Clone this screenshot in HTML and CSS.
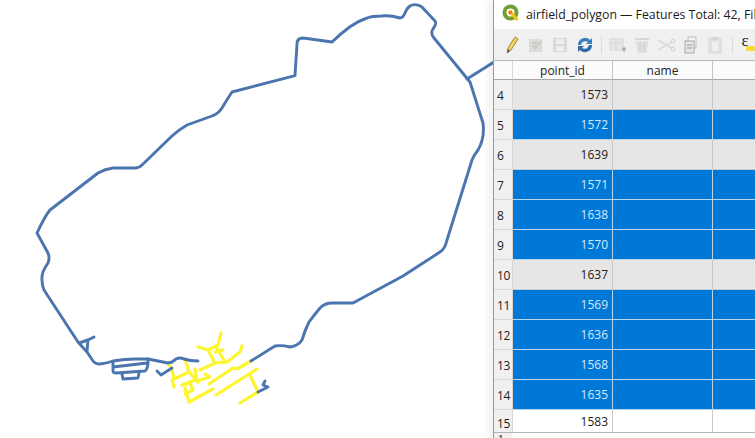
FILE: index.html
```html
<!DOCTYPE html>
<html lang="en">
<head>
<meta charset="utf-8">
<title>airfield_polygon</title>
<link rel="stylesheet" href="styles.css">
</head>
<body>
<div class="desktop">
  <svg class="map" width="494" height="438" viewBox="0 0 494 438">
    <g class="road road-yellow">
      <path d="M168 363 L172 370 L174 378"/>
      <path d="M185 359 L189 372 L172 380 L174 387"/>
      <path d="M189 372 L198 382"/>
      <path d="M195 369 L197 381 L210 377 L205 374"/>
      <path d="M182 385 L195 380"/>
      <path d="M182 385 L190 383 L193 390 L185 394"/>
      <path d="M185 388 L189 402 L213 389"/>
      <path d="M200 370 L215 363 L208 350 L198 347"/>
      <path d="M208 350 L218 345 L221 333"/>
      <path d="M215 363 L227 362 L240 352 L242 346"/>
      <path d="M217 348 L225 362"/>
      <path d="M215 352 L223 350"/>
      <path d="M209 384 L233 368 L237 369 L251 361"/>
      <path d="M216 395 L257 369"/>
      <path d="M250 375 L258 392"/>
      <path d="M240 403 L258 392"/>
    </g>
    <g class="road road-blue">
      <path d="M251 361 L275 346 Q282 345 290 347 Q298 346 302 340 Q305 330 309 322 Q315 314 320 308 Q325 303 332 303 L353 303 L403 276 L440 252 Q445 249 447 240 L472 160 Q474 155 478 150 Q485 138 483 123 L470 82 L434 38 Q430 33 433 29 Q437 24 435 21 L421.700 6.700 Q415 3 410 6 Q407 8 405 13 Q403 18 400 18 Q390 15 381.700 16 Q372 16 367 18 Q358 21 350 26.700 Q340 34 332 42 L303 38 Q297 38 297 44 L295 75.700 L232 92 Q228 98 222 108 Q218 114 212 116 L187 125 Q180 129 172 136 L142 165 Q139 168 135 168 L113 168 Q105 169 98 173 L50 210 Q45 216 37 233 L48 253 Q50 258 48 263 Q41 273 42 280 Q42 285 44 290 L78 342 L87 352 L93 361 Q95 364 100 364 Q108 363 113 361 Q125 359 135 359 L148 359 L168 363 L172 362 L176 359 Q180 357 184 359 Q190 361 198 361"/>
      <path d="M467 79 L494 62"/>
      <path d="M79 343 L88 340 L94 337 M88 340 L87 351"/>
      <path d="M113 362 L113 371 Q113 373 116 373 L145 371 Q147 370 148 364 L148 359 M113 367 L147 363"/>
      <path d="M122 374 L123 379 L138 378 L139 373"/>
      <path d="M157 371 L161 375 L172 368"/>
      <path d="M258 392 L268 387 L263 385 L265 381"/>
    </g>
  </svg>

  <section class="window">
    <header class="titlebar">
      <svg class="logo" width="18" height="18" viewBox="0 0 18 18">
        <circle cx="8.500" cy="8.500" r="6" fill="none" stroke="#6fa032" stroke-width="4"/>
        <circle cx="8.500" cy="8.500" r="2.200" fill="#ee7913"/>
        <path d="M9.500 9.500 L15.500 16" stroke="#f0c419" stroke-width="3"/>
      </svg>
      <span class="title">airfield_polygon — Features Total: 42, Filtered: 42, Selected: 9</span>
    </header>

    <div class="toolbar">
      <svg class="tool" width="24" height="18" viewBox="0 0 24 18"><path d="M8 17 L9 12 L16 1 L19 3 L12 14 Z" fill="#efd35c" stroke="#a08d3a"/><path d="M8 17 L9 13 L11 15 Z" fill="#555"/></svg>
      <svg class="tool" width="24" height="18" viewBox="0 0 24 18"><rect x="5" y="3" width="13" height="13" fill="#dcdcd8"/><path d="M8 7 H14 M8 10 H12 M10 13 L18 5" stroke="#c6c6c2" stroke-width="1.500"/></svg>
      <svg class="tool" width="24" height="18" viewBox="0 0 24 18"><rect x="5" y="2" width="14" height="14" rx="1" fill="#d8d8d8"/><rect x="8" y="3" width="8" height="5" fill="#eee"/><rect x="8" y="10" width="8" height="5" fill="#eee"/></svg>
      <svg class="tool" width="24" height="18" viewBox="0 0 24 18"><path d="M5 9 A7 7 0 0 1 17 4 L19 2 V8 H13 L15 6 A4.500 4.500 0 0 0 8 9 Z" fill="#3d7fc1"/><path d="M19 9 A7 7 0 0 1 7 14 L5 16 V10 H11 L9 12 A4.500 4.500 0 0 0 16 9 Z" fill="#2f6ba8"/></svg>
      <span class="sep"></span>
      <svg class="tool" width="24" height="18" viewBox="0 0 24 18"><rect x="5" y="3" width="13" height="11" fill="#e6e6e4" stroke="#d8d8d5"/><path d="M5 7 H18 M11 3 V14" stroke="#d8d8d5"/><path d="M17 13 H21 M19 11 V16" stroke="#aaa" stroke-width="1.500"/></svg>
      <svg class="tool" width="24" height="18" viewBox="0 0 24 18"><path d="M6 5 H18 L17 17 H7 Z" fill="#e0e0de"/><rect x="5" y="2" width="14" height="2" fill="#d6d6d3"/><path d="M10 7 V15 M14 7 V15" stroke="#cacac6"/></svg>
      <svg class="tool" width="24" height="18" viewBox="0 0 24 18"><path d="M4 4 L18 12 M4 14 L18 6" stroke="#dadad8" stroke-width="1.500" fill="none"/><circle cx="19" cy="13" r="2" fill="none" stroke="#cfcfcd"/><circle cx="19" cy="5" r="2" fill="none" stroke="#cfcfcd"/></svg>
      <svg class="tool" width="24" height="18" viewBox="0 0 24 18"><rect x="9" y="1" width="8" height="11" fill="#f3f3f3" stroke="#bbb"/><rect x="6" y="5" width="9" height="12" fill="#e6e6e6" stroke="#aaa"/><path d="M8 9 H13 M8 12 H13" stroke="#999"/></svg>
      <svg class="tool" width="24" height="18" viewBox="0 0 24 18"><rect x="6" y="2" width="12" height="15" fill="#e2e2e0" stroke="#d8d8d6"/><rect x="9" y="1" width="6" height="3" fill="#d6d6d4"/><rect x="9" y="6" width="6" height="9" fill="#efefef"/></svg>
      <span class="sep sep-last"></span>
      <span class="expr"><span class="expr-box"></span><span class="expr-sign">ε</span></span>
    </div>

    <div class="table">
      <div class="row head">
        <div class="num"></div>
        <div class="cell">point_id</div>
        <div class="cell">name</div>
        <div class="cell">en_name</div>
      </div>
      <div class="row grey"><div class="num">4</div><div class="cell id">1573</div><div class="cell"></div><div class="cell"></div></div>
      <div class="row sel"><div class="num">5</div><div class="cell id">1572</div><div class="cell"></div><div class="cell"></div></div>
      <div class="row grey"><div class="num">6</div><div class="cell id">1639</div><div class="cell"></div><div class="cell"></div></div>
      <div class="row sel"><div class="num">7</div><div class="cell id">1571</div><div class="cell"></div><div class="cell"></div></div>
      <div class="row sel"><div class="num">8</div><div class="cell id">1638</div><div class="cell"></div><div class="cell"></div></div>
      <div class="row sel"><div class="num">9</div><div class="cell id">1570</div><div class="cell"></div><div class="cell"></div></div>
      <div class="row grey"><div class="num">10</div><div class="cell id">1637</div><div class="cell"></div><div class="cell"></div></div>
      <div class="row sel"><div class="num">11</div><div class="cell id">1569</div><div class="cell"></div><div class="cell"></div></div>
      <div class="row sel"><div class="num">12</div><div class="cell id">1636</div><div class="cell"></div><div class="cell"></div></div>
      <div class="row sel"><div class="num">13</div><div class="cell id">1568</div><div class="cell"></div><div class="cell"></div></div>
      <div class="row sel"><div class="num">14</div><div class="cell id">1635</div><div class="cell"></div><div class="cell"></div></div>
      <div class="row last"><div class="num">15</div><div class="cell id">1583</div><div class="cell"></div><div class="cell"></div></div>
    </div>
    <div class="foot"><span class="foot-num">1</span><span class="foot-rest"></span></div>
  </section>
</div>
</body>
</html>
```
FILE: styles.css
```css
html, body {
  margin: 0;
  padding: 0;
  height: 100%;
  overflow: hidden;
  background: #fff;
}

.desktop {
  display: flex;
  width: 755px;
  height: 438px;
  overflow: hidden;
  font-family: "Open Sans", "Noto Sans", sans-serif;
  color: #222;
}

.map {
  flex: none;
  display: block;
}

.road {
  fill: none;
  stroke-linecap: round;
  stroke-linejoin: round;
}

.road-blue {
  stroke: #4a75ae;
  stroke-width: 2.900;
}

.road-yellow {
  stroke: #fdf52e;
  stroke-width: 3.200;
}

.window {
  flex: 1;
  min-width: 0;
  height: 438px;
  display: flex;
  flex-direction: column;
  background: #f0f0f0;
  border-left: 1px solid #9a9a9a;
  box-sizing: border-box;
  margin-left: -1px;
  box-shadow: -5px 0 7px rgba(0, 0, 0, 0.06);
  overflow: hidden;
}

.titlebar {
  flex: none;
  height: 29px;
  display: flex;
  align-items: center;
  background: #fff;
  padding-left: 8px;
  white-space: nowrap;
  overflow: hidden;
}

.logo {
  flex: none;
  margin-right: 6px;
  margin-top: -3px;
}

.title {
  font-size: 12.300px;
  color: #1a1a1a;
  margin-top: -1px;
}

.toolbar {
  flex: none;
  height: 31px;
  display: flex;
  align-items: center;
  padding-left: 5px;
  background: #f0f0f0;
  white-space: nowrap;
  overflow: hidden;
}

.tool {
  flex: none;
  margin-right: 0.500px;
}

.sep {
  flex: none;
  width: 1px;
  height: 18px;
  background: #dcdcdc;
  margin: 0 3px 0 4px;
}

.sep-last {
  margin: 0 9px 0 4px;
}

.expr {
  flex: none;
  position: relative;
  display: block;
  width: 22px;
  height: 18px;
}

.expr-box {
  position: absolute;
  left: 4px;
  top: 10px;
  width: 14px;
  height: 5px;
  background: #f5dc3c;
}

.expr-sign {
  position: absolute;
  left: 0;
  top: -5px;
  font-family: "Liberation Serif", serif;
  font-size: 17px;
  color: #222;
}

.table {
  flex: none;
  display: flex;
  flex-direction: column;
  width: 361px;
}

.row {
  display: grid;
  grid-template-columns: 19px 100px 100px 142px;
  height: 30px;
  box-sizing: border-box;
  font-size: 12px;
}

.num {
  display: flex;
  align-items: center;
  padding: 1px 0 0 3px;
  background: #f0f0f0;
  border-right: 1px solid #d8d8d8;
  border-bottom: 1px solid #d8d8d8;
  font-size: 12px;
  letter-spacing: -0.300px;
}

.cell {
  display: flex;
  align-items: center;
  box-sizing: border-box;
  border-right: 1px solid #c9c9c9;
  border-bottom: 1px solid #c9c9c9;
  white-space: nowrap;
  overflow: hidden;
}

.id {
  justify-content: flex-end;
  padding-right: 4px;
  font-size: 12px;
}

.head {
  height: 20px;
  background: #fbfbfb;
  border-top: 1px solid #b9b9b9;
}

.head .num {
  background: #fbfbfb;
  border-bottom: 1px solid #a8a8a8;
}

.head .cell {
  justify-content: center;
  background: #fbfbfb;
  border-bottom: 1px solid #a8a8a8;
  border-right: 1px solid #c4c4c4;
}

.grey .cell {
  background: #e7e6e4;
}

.sel .cell {
  background: #0078d7;
  color: #d5e9fa;
  border-color: #b7d6ee;
}

.last {
  height: 23px;
}

.last .cell {
  background: #fff;
  border-bottom: 1px solid #b4b4b4;
}

.last .num {
  padding-top: 5px;
  border-bottom: 1px solid #b4b4b4;
}

.foot {
  flex: 1;
  display: flex;
  overflow: hidden;
}

.foot-num {
  flex: none;
  width: 14px;
  padding-left: 4px;
  font-size: 10px;
  line-height: 12px;
}

.foot-rest {
  flex: 1;
  background: #fff;
}
```
